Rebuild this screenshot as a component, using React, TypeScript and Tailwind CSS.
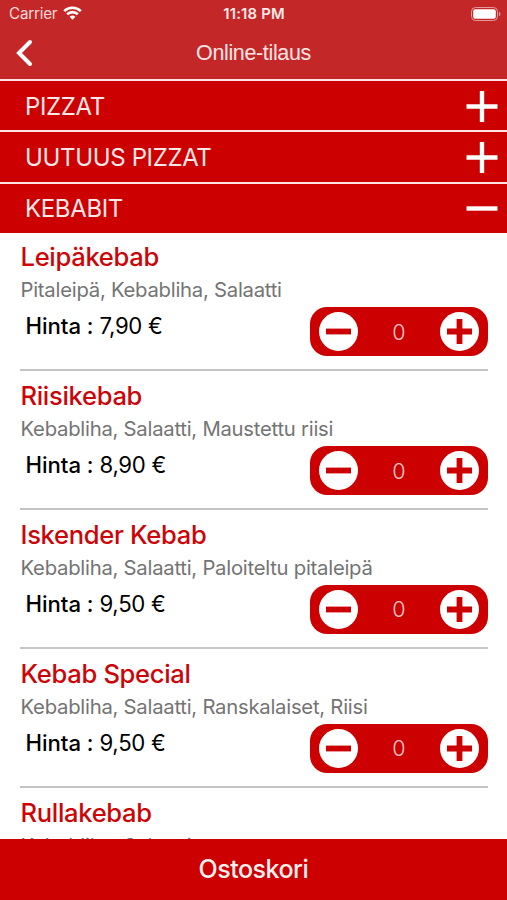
import type { ReactElement } from "react";

const ITEMS = [
  {
    name: "Leipäkebab",
    description: "Pitaleipä, Kebabliha, Salaatti",
    price: "7,90 €",
  },
  {
    name: "Riisikebab",
    description: "Kebabliha, Salaatti, Maustettu riisi",
    price: "8,90 €",
  },
  {
    name: "Iskender Kebab",
    description: "Kebabliha, Salaatti, Paloiteltu pitaleipä",
    price: "9,50 €",
  },
  {
    name: "Kebab Special",
    description: "Kebabliha, Salaatti, Ranskalaiset, Riisi",
    price: "9,50 €",
  },
  {
    name: "Rullakebab",
    description: "Kebabliha, Salaatti",
    price: "9,50 €",
  },
];

const CATEGORIES = [
  { name: "PIZZAT", open: false },
  { name: "UUTUUS PIZZAT", open: false },
  { name: "KEBABIT", open: true },
];

function StatusBar(): ReactElement {
  return (
    <div className="grid h-7 grid-cols-3 items-center pr-[6px] pl-[9px] text-white">
      <div className="flex items-center gap-[6px]">
        <span className="text-[15.2px] text-[#ffdcdc] tracking-[-0.2px]">
          Carrier
        </span>
        <svg aria-hidden="true" className="-mt-px h-[14px] w-[19px]" viewBox="0 0 19 14">
          <path
            d="M1.2 5.1a12 12 0 0 1 16.6 0M4.2 8.3a7.6 7.6 0 0 1 10.6 0"
            fill="none"
            stroke="currentColor"
            strokeWidth="2.6"
          />
          <path d="M9.5 13.8 6.6 10.8a4.2 4.2 0 0 1 5.8 0Z" fill="currentColor" />
        </svg>
      </div>
      <span className="-ml-[2px] whitespace-nowrap text-center font-semibold text-[14.8px] text-[#ffeaea] tracking-[0.2px]">
        11:18 PM
      </span>
      <svg
        aria-hidden="true"
        className="-mt-px h-[14px] w-[30px] justify-self-end"
        viewBox="0 0 30 14"
      >
        <rect
          fill="none"
          height="13"
          rx="4"
          stroke="#e39a9a"
          width="26"
          x="0.5"
          y="0.5"
        />
        <rect fill="#fff" height="9.6" rx="2" width="22.6" x="2.2" y="2.2" />
        <path d="M28 4.8c2 .8 2 3.6 0 4.4Z" fill="#e39a9a" />
      </svg>
    </div>
  );
}

function Header(): ReactElement {
  return (
    <header className="h-[79px] bg-[#c42727]">
      <StatusBar />
      <div className="grid h-[49px] grid-cols-[60px_1fr_60px] items-center">
        <button aria-label="Takaisin" className="pl-[15px]" type="button">
          <svg aria-hidden="true" className="h-7 w-[18px]" viewBox="0 0 18 28">
            <path
              d="M15 3 4 14l11 11"
              fill="none"
              stroke="#fff"
              strokeLinecap="round"
              strokeWidth="4"
            />
          </svg>
        </button>
        <h1 className="pt-px text-center font-['Liberation_Sans',sans-serif] text-[21.5px] text-[#ffe6e6] tracking-[-0.35px]">
          Online-tilaus
        </h1>
      </div>
    </header>
  );
}

function Category({ name, open }: { name: string; open: boolean }): ReactElement {
  return (
    <div className="flex h-[51.3px] items-center justify-between border-[#ffe3e3] border-t-[2.5px] bg-[#cc0000] pr-[9px] pl-[25px]">
      <h2 className="pt-[2px] text-[#ffe8e8] text-[24px] tracking-[-0.35px]">
        {name}
      </h2>
      <svg aria-hidden="true" className="h-8 w-8" viewBox="0 0 32 32">
        <path
          d={open ? "M.5 16.5h31" : "M.5 16.5h31M16 1v31"}
          fill="none"
          stroke="#fff"
          strokeWidth="4.4"
        />
      </svg>
    </div>
  );
}

function RoundButton({ plus }: { plus?: boolean }): ReactElement {
  return (
    <button aria-label={plus ? "Lisää" : "Vähennä"} type="button">
      <svg aria-hidden="true" className="block size-[39px]" viewBox="0 0 39 39">
        <circle cx="19.5" cy="19.5" fill="#fff" r="19.5" />
        <path
          d={plus ? "M7 19.5h25M19.5 7v25" : "M7 19.5h25"}
          fill="none"
          stroke="#cc0000"
          strokeWidth="5.8"
        />
      </svg>
    </button>
  );
}

function Stepper(): ReactElement {
  return (
    <div className="flex h-[49px] w-[177.5px] shrink-0 items-center justify-between rounded-[17px] bg-[#cc0000] px-[8.5px]">
      <RoundButton />
      <span className="font-light text-[#ffcccc] text-[21.5px] tracking-[-0.5px]">
        0
      </span>
      <RoundButton plus />
    </div>
  );
}

function MenuItem({ name, description, price }: (typeof ITEMS)[number]): ReactElement {
  return (
    <li className="mr-[19.5px] ml-5 h-[138.8px] border-[#c5c5c5] border-b-2 pt-[9px]">
      <h3 className="pl-[0.5px] font-medium text-[#cb0508] text-[25.6px] leading-8 tracking-[-0.33px]">
        {name}
      </h3>
      <p className="pt-px pl-[0.5px] text-[#747474] text-[20.3px] leading-8 tracking-[-0.25px]">
        {description}
      </p>
      <div className="flex items-start justify-between pl-[5.5px]">
        <p className="pt-[4px] text-[22.2px] text-black leading-8 tracking-[-0.3px]">
          <span className="font-medium tracking-[-0.05px]">Hinta :</span> {price}
        </p>
        <div className="pt-px">
          <Stepper />
        </div>
      </div>
    </li>
  );
}

export default function App(): ReactElement {
  return (
    <div className="flex h-[900px] w-[507px] flex-col overflow-hidden bg-white font-['Inter',sans-serif]">
      <Header />
      <main className="min-h-0 flex-1 overflow-hidden">
        {CATEGORIES.map((category) => (
          <Category key={category.name} {...category} />
        ))}
        <ul className="-mt-[0.5px]">
          {ITEMS.map((item) => (
            <MenuItem key={item.name} {...item} />
          ))}
        </ul>
      </main>
      <button
        className="h-[61px] shrink-0 bg-[#cc0000] pt-px font-medium text-[#fff0f0] text-[25px] tracking-[-0.5px]"
        type="button"
      >
        Ostoskori
      </button>
    </div>
  );
}
